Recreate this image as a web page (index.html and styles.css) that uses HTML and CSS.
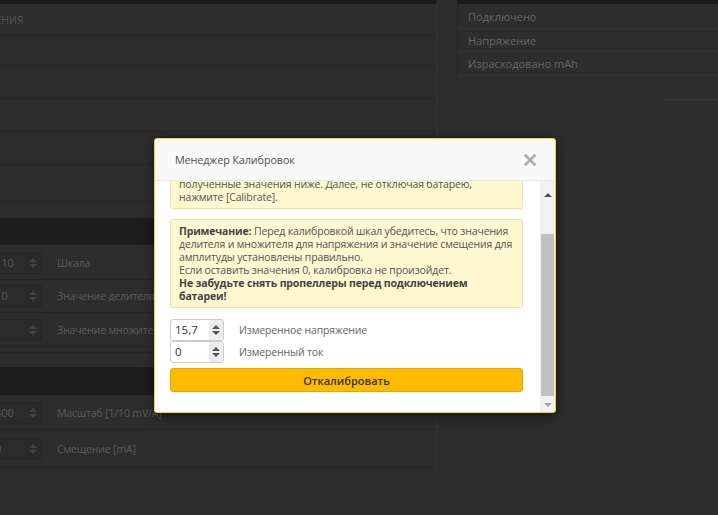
FILE: index.html
```html
<!DOCTYPE html>
<html>

<head>
    <meta charset="UTF-8">
    <title>Менеджер Калибровок</title>
    <link rel="stylesheet" href="styles.css">
</head>

<body>
    <div class="page">
        <div class="left-panel">
            <div class="row row-head"><span class="row-title">Значения</span></div>
            <div class="row row-a"></div>
            <div class="row row-b"></div>
            <div class="row row-b"></div>
            <div class="row row-b"></div>
            <div class="row row-c"></div>
            <div class="gap gap-1"></div>

            <div class="band"></div>
            <div class="row row-d">
                <div class="spin"><span class="spin-value">110</span><span class="spin-arrows"><i class="up"></i><i class="down"></i></span></div>
                <span class="row-label">Шкала</span>
            </div>
            <div class="row row-b">
                <div class="spin"><span class="spin-value">10</span><span class="spin-arrows"><i class="up"></i><i class="down"></i></span></div>
                <span class="row-label">Значение делителя</span>
            </div>
            <div class="row row-e">
                <div class="spin"><span class="spin-value">1</span><span class="spin-arrows"><i class="up"></i><i class="down"></i></span></div>
                <span class="row-label">Значение множителя</span>
            </div>
            <div class="row row-thin"></div>
            <div class="gap gap-2"></div>

            <div class="band band-2"></div>
            <div class="row row-d">
                <div class="spin"><span class="spin-value">400</span><span class="spin-arrows"><i class="up"></i><i class="down"></i></span></div>
                <span class="row-label">Масштаб [1/10 mV/A]</span>
            </div>
            <div class="row row-f">
                <div class="spin"><span class="spin-value">0</span><span class="spin-arrows"><i class="up"></i><i class="down"></i></span></div>
                <span class="row-label">Смещение [mA]</span>
            </div>
        </div>

        <div class="right-col">
            <div class="right-panel">
                <div class="info-row info-1">Подключено</div>
                <div class="info-row info-2">Напряжение</div>
                <div class="info-row info-3">Израсходовано mAh</div>
            </div>
            <div class="right-line"></div>
        </div>
    </div>

    <div class="modal">
        <div class="modal-header">
            <div class="modal-title">Менеджер Калибровок</div>
            <svg class="modal-close" width="12" height="12" viewBox="0 0 12 12">
                <path d="M1.5 1.5 L10.5 10.5 M10.5 1.5 L1.5 10.5" stroke="#adadad" stroke-width="2.6" stroke-linecap="square" />
            </svg>
        </div>
        <div class="modal-body">
            <div class="modal-content">
                <div class="note note-first">
                    полученные значения ниже. Далее, не отключая батарею,<br>
                    нажмите [Calibrate].
                </div>
                <div class="note">
                    <b>Примечание:</b> Перед калибровкой шкал убедитесь, что значения<br>
                    делителя и множителя для напряжения и значение смещения для<br>
                    амплитуды установлены правильно.<br>
                    Если оставить значения 0, калибровка не произойдет.<br>
                    <b>Не забудьте снять пропеллеры перед подключением<br>
                    батареи!</b>
                </div>

                <div class="fields">
                    <div class="field">
                        <div class="number-input"><span class="number-value">15,7</span><span class="number-arrows"><i class="up"></i><i class="down"></i></span></div>
                        <span class="field-label">Измеренное напряжение</span>
                    </div>
                    <div class="field">
                        <div class="number-input"><span class="number-value">0</span><span class="number-arrows"><i class="up"></i><i class="down"></i></span></div>
                        <span class="field-label">Измеренный ток</span>
                    </div>
                </div>

                <button class="calibrate-btn">Откалибровать</button>
            </div>
            <div class="scrollbar">
                <div class="sb-btn sb-up"><i></i></div>
                <div class="sb-track"><div class="sb-thumb"></div></div>
                <div class="sb-btn sb-down"><i></i></div>
            </div>
        </div>
    </div>
</body>

</html>
```

FILE: styles.css
```css
body {
    margin: 0;
    padding: 0;
    width: 718px;
    height: 515px;
    overflow: hidden;
    background-color: #2d2d2d;
    font-family: 'Open Sans', 'Liberation Sans', sans-serif;
    font-size: 11px;
    color: #5e5e5e;
}

.page {
    display: flex;
    align-items: flex-start;
}

/* left settings panel, partly off screen */

.left-panel {
    width: 476px;
    margin-left: -40px;
    border-top: 4px solid #1b1b1b;
    border-right: 1px solid #343434;
}

.row {
    display: flex;
    align-items: center;
    padding-left: 30px;
    border-bottom: 1px solid #262626;
}

.row-head {
    height: 31px;
}

.row-title {
    margin-left: -22px;
    text-transform: uppercase;
    font-size: 10px;
    letter-spacing: 0.3px;
    color: #565656;
}

.row-a { height: 29px; }
.row-b { height: 32px; }
.row-c { height: 36px; }
.row-d { height: 32px; padding-top: 2px; }
.row-e { height: 33px; }
.row-f { height: 37px; }
.row-thin { height: 5px; }

.gap-1 { height: 16px; }
.gap-2 { height: 14px; }

.band {
    height: 27px;
    background-color: #1d1d1d;
}

.band-2 {
    height: 28px;
}

.spin {
    display: flex;
    width: 50px;
    height: 20px;
    border: 1px solid #272727;
    background-color: #2b2b2b;
}

.spin-value {
    flex: 1;
    padding-left: 4px;
    line-height: 20px;
    font-size: 11px;
    color: #5a5a5a;
    overflow: hidden;
}

.spin-arrows {
    width: 16px;
    display: flex;
    flex-direction: column;
    align-items: center;
    justify-content: center;
    gap: 2px;
    background-color: #2a2a2a;
}

.spin-arrows i,
.number-arrows i {
    width: 0;
    height: 0;
    border-left: 4px solid transparent;
    border-right: 4px solid transparent;
}

.spin-arrows .up { border-bottom: 4px solid #434343; }
.spin-arrows .down { border-top: 4px solid #434343; }

.row-label {
    margin-left: 15px;
    font-size: 10.5px;
    letter-spacing: -0.15px;
    color: #5c5c5c;
}

/* right status panel */

.right-col {
    flex: 1;
    margin-left: 20px;
}

.right-panel {
    border-top: 4px solid #1b1b1b;
    border-left: 1px solid #262626;
    padding-bottom: 3px;
}

.info-row {
    display: flex;
    align-items: center;
    padding-left: 10px;
    border-bottom: 1px solid #343434;
    color: #666;
}

.info-1 { height: 24px; }
.info-2 { height: 22px; }
.info-3 { height: 23px; }

.right-line {
    margin: 20px 0 0 205px;
    height: 1px;
    background-color: #353535;
}

/* calibration dialog */

.modal {
    position: absolute;
    left: 154px;
    top: 138px;
    width: 400px;
    height: 273px;
    display: flex;
    flex-direction: column;
    background-color: #fff;
    border: 1px solid #f2cf3f;
    border-radius: 3px;
    box-shadow: 0 3px 12px rgba(0, 0, 0, 0.55);
    overflow: hidden;
}

.modal-header {
    height: 41px;
    display: flex;
    justify-content: space-between;
    align-items: center;
    padding: 0 19px 0 20px;
    background-color: #f9f9f9;
    border-bottom: 1px solid #e8e8e8;
    position: relative;
    z-index: 1;
}

.modal-title {
    font-size: 10.8px;
    letter-spacing: -0.1px;
    color: #505050;
}

.modal-body {
    flex: 1;
    display: flex;
    overflow: hidden;
}

.modal-content {
    flex: 1;
    padding: 0 17px 0 15px;
    overflow: hidden;
}

.note {
    padding: 5px 8px 4px;
    margin-bottom: 10px;
    background-color: #fff7cf;
    border: 1px solid #f1e3a0;
    border-radius: 3px;
    font-size: 10.5px;
    letter-spacing: -0.15px;
    line-height: 13px;
    color: #555;
    white-space: nowrap;
}

.note b {
    color: #444;
}

.note-first {
    margin-top: -9px;
}

.fields {
    margin-top: 11px;
}

.field {
    display: flex;
    align-items: center;
}

.number-input {
    display: flex;
    width: 52px;
    height: 20px;
    border: 1px solid #ccc;
    border-radius: 3px;
    background-color: #fff;
    overflow: hidden;
}

.number-value {
    flex: 1;
    padding-left: 4px;
    line-height: 20px;
    font-size: 11.5px;
    color: #333;
}

.number-arrows {
    width: 14px;
    display: flex;
    flex-direction: column;
    align-items: center;
    justify-content: center;
    gap: 2px;
    background-color: #ececec;
}

.number-arrows .up { border-bottom: 4px solid #555; }
.number-arrows .down { border-top: 4px solid #555; }

.field-label {
    margin-left: 15px;
    font-size: 10.5px;
    letter-spacing: -0.15px;
    color: #666;
}

.calibrate-btn {
    display: block;
    width: 100%;
    height: 24px;
    margin-top: 5px;
    padding: 0;
    background-color: #ffbb00;
    border: 1px solid #e3a700;
    border-radius: 3px;
    font-family: 'Open Sans', 'Liberation Sans', sans-serif;
    font-size: 11px;
    font-weight: 600;
    color: #333;
}

.scrollbar {
    width: 15px;
    display: flex;
    flex-direction: column;
    background-color: #f1f1f1;
}

.sb-btn {
    display: flex;
    justify-content: center;
    align-items: center;
}

.sb-btn i {
    width: 0;
    height: 0;
    border-left: 4px solid transparent;
    border-right: 4px solid transparent;
}

.sb-up {
    height: 22px;
}

.sb-up i {
    margin-top: 5px;
    border-bottom: 4px solid #505050;
}

.sb-down {
    height: 15px;
}

.sb-down i {
    border-top: 4px solid #a3a3a3;
}

.sb-track {
    flex: 1;
    padding: 31px 1px 0;
}

.sb-thumb {
    height: 162px;
    background-color: #c1c1c1;
}
```
